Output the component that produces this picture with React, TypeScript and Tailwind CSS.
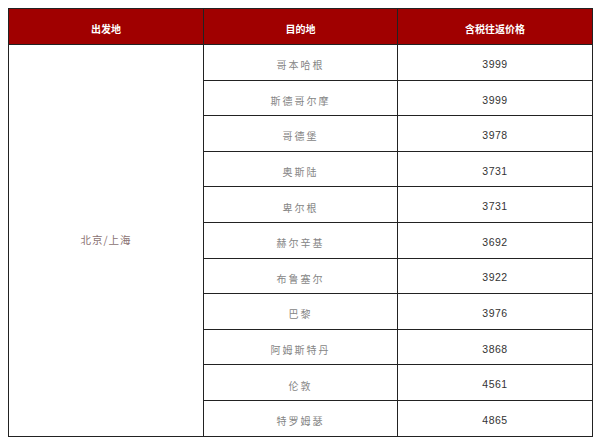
const rows: [string, string][] = [
  ['哥本哈根', '3999'],
  ['斯德哥尔摩', '3999'],
  ['哥德堡', '3978'],
  ['奥斯陆', '3731'],
  ['卑尔根', '3731'],
  ['赫尔辛基', '3692'],
  ['布鲁塞尔', '3922'],
  ['巴黎', '3976'],
  ['阿姆斯特丹', '3868'],
  ['伦敦', '4561'],
  ['特罗姆瑟', '4865'],
];

const cjk = "font-['Noto_Sans_CJK_SC',sans-serif]";

export default function App() {
  return (
    <div className="w-[600px] h-[446px] bg-white pt-[8px] pl-[8px]">
      <table className="w-[585px] border-collapse table-fixed border-t border-t-[#c8c8c8]">
        <thead>
          <tr className="h-[36px] bg-[#a00000] text-white">
            <th className={`w-[195px] border border-[#222] pt-[4px] text-[10px] font-bold ${cjk}`}>出发地</th>
            <th className={`w-[194px] border border-[#222] pt-[4px] text-[10px] font-bold ${cjk}`}>目的地</th>
            <th className={`border border-[#222] pt-[4px] text-[10px] font-bold ${cjk}`}>含税往返价格</th>
          </tr>
        </thead>
        <tbody>
          {rows.map(([city, price], i) => (
            <tr key={city} className="h-[35.6px]">
              {i === 0 && (
                <td
                  rowSpan={rows.length}
                  className={`border border-[#222] text-center text-[10.5px] text-[#8a7272] tracking-[1px] ${cjk}`}
                >
                  北京/上海
                </td>
              )}
              <td className={`border border-[#222] pt-[5px] text-center text-[10px] text-[#858585] tracking-[2px] ${cjk}`}>
                {city}
              </td>
              <td className="border border-[#222] pt-[5px] text-center text-[10.5px] text-[#333] tracking-[0.5px] font-['Liberation_Sans',sans-serif]">
                {price}
              </td>
            </tr>
          ))}
        </tbody>
      </table>
    </div>
  );
}
